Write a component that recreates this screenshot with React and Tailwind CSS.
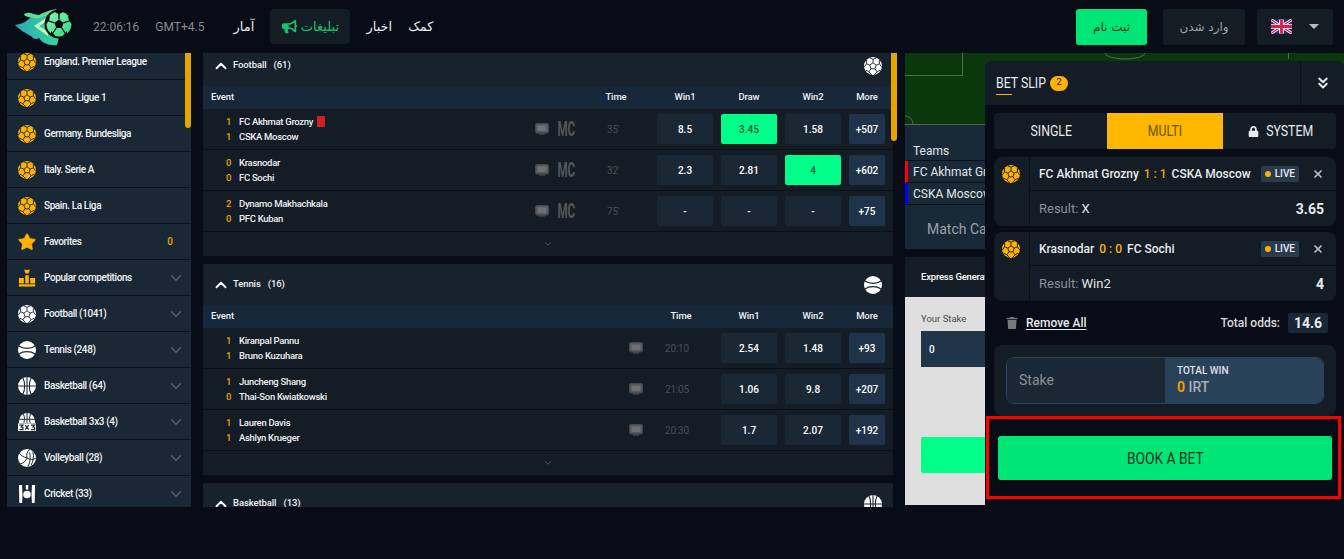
import React from "react";
import { ChevronDown, ChevronUp, ChevronsDown, X, Star } from "lucide-react";
import { FaBullhorn, FaLock, FaTrash } from "react-icons/fa";

function Ball({ color = "#ffb300", line = "#1a2836", size = 18 }) {
  return (
    <svg width={size} height={size} viewBox="0 0 20 20" className="shrink-0">
      <circle cx="10" cy="10" r="10" fill={color} />
      <g stroke={line} strokeWidth="1" fill="none">
        <path d="M10 6.400 13.500 9 12.200 13.100H7.800L6.500 9Z" />
        <path d="M10 6.400V2.500M13.500 9 17.200 7.600M12.200 13.100 14.600 16.500M7.800 13.100 5.400 16.500M6.500 9 2.800 7.600" />
        <path d="M10 2.500 6 .8M10 2.500 14 .8M17.200 7.600 19.600 11M17.200 7.600 17 3.200M14.600 16.500 18 14.500M14.600 16.500 11.500 19.800M5.400 16.500 8.500 19.800M5.400 16.500 2 14.500M2.800 7.600 .4 11M2.800 7.600 3 3.200" />
      </g>
    </svg>
  );
}
function Tennis({ size = 18, line = "#1a2836" }) {
  return (
    <svg width={size} height={size} viewBox="0 0 20 20" className="shrink-0">
      <circle cx="10" cy="10" r="10" fill="#fff" />
      <path d="M1 5.500C6 9 14 9 19 5.500M1 14.500C6 11 14 11 19 14.500" stroke={line} strokeWidth="1.400" fill="none" />
    </svg>
  );
}
function Basket({ size = 18, line = "#1a2836" }) {
  return (
    <svg width={size} height={size} viewBox="0 0 20 20" className="shrink-0">
      <circle cx="10" cy="10" r="10" fill="#fff" />
      <path d="M10 0V20M0 10H20M5.500 1C8 6 8 14 5.500 19M14.500 1C12 6 12 14 14.500 19" stroke={line} strokeWidth="1.200" fill="none" />
    </svg>
  );
}
function Basket3() {
  return (
    <svg width="18" height="18" viewBox="0 0 20 20" className="shrink-0">
      <path d="M1 11C1 4 5 0 10 0S19 4 19 11Z" fill="#fff" />
      <path d="M10 0V11M6 1C7.500 4 7.500 8 6.500 11M14 1C12.500 4 12.500 8 13.500 11M1 7H19" stroke="#1a2836" strokeWidth="1.100" fill="none" />
      <rect x="0" y="11.500" width="20" height="8.500" fill="#fff" />
      <path d="M1.500 13.500H5.500L3.500 15.500 5.500 16V18.500H1.500M8 13.500 12 18.500M12 13.500 8 18.500M14.500 13.500H18.500L16.500 15.500 18.500 16V18.500H14.500" stroke="#1a2836" strokeWidth="1.300" fill="none" />
    </svg>
  );
}
function Volley() {
  return (
    <svg width="18" height="18" viewBox="0 0 20 20" className="shrink-0">
      <circle cx="10" cy="10" r="10" fill="#fff" />
      <path d="M10 10C9 6 10 3 13 .5M10 10C6 9 3 7 1.500 4.500M10 10C13 12 17 12 19.500 10.500M10 10C9 13 6 16 2.500 16.500M13 4C14 9 14 14 11 19.500M16.500 3C18 8 17 14 14.500 18" stroke="#1a2836" strokeWidth="1.100" fill="none" />
    </svg>
  );
}
function Cricket() {
  return (
    <svg width="18" height="18" viewBox="0 0 20 20" className="shrink-0">
      <path d="M1 0H4.500L5 11 4.500 20H1.500Z M19 0H15.500L15 11 15.500 20H18.500Z" fill="#fff" />
      <path d="M8.600 0H11.400V5H8.600Z" fill="#fff" />
      <circle cx="10" cy="10.500" r="4.200" fill="#fff" />
    </svg>
  );
}
function Podium() {
  return (
    <svg width="18" height="18" viewBox="0 0 20 20" className="shrink-0">
      <path d="M7 0.500 10 1 13 0.500 12.500 3 11.500 5H8.500L7.500 3Z" fill="#ffb300" />
      <rect x="8" y="7" width="4" height="9" fill="#ffb300" />
      <rect x="1" y="10" width="5.500" height="6" fill="#ffb300" />
      <rect x="13.500" y="10" width="5.500" height="6" fill="#ffb300" />
      <rect x="1" y="17" width="18" height="2.500" fill="#ffb300" />
    </svg>
  );
}
function Tv() {
  return (
    <svg width="14" height="12" viewBox="0 0 14 12" className="shrink-0">
      <rect x=".5" y=".5" width="13" height="9.500" rx="1.500" fill="#55595e" stroke="#45494e" />
      <rect x="2.500" y="2.500" width="9" height="5.500" fill="#6d7175" />
      <rect x="4" y="10.500" width="6" height="1" fill="#55595e" />
    </svg>
  );
}
function Flag() {
  return (
    <svg width="21" height="15" viewBox="0 0 60 40">
      <rect width="60" height="40" fill="#2b2f7a" />
      <path d="M0 0 60 40M60 0 0 40" stroke="#fff" strokeWidth="8" />
      <path d="M0 0 60 40M60 0 0 40" stroke="#d61f4b" strokeWidth="3" />
      <path d="M30 0V40M0 20H60" stroke="#fff" strokeWidth="13" />
      <path d="M30 0V40M0 20H60" stroke="#d61f4b" strokeWidth="8" />
    </svg>
  );
}
function Logo() {
  return (
    <svg width="60" height="40" viewBox="0 0 60 40" className="shrink-0">
      <defs>
        <linearGradient id="fl" x1="0" y1="0" x2="1" y2="0">
          <stop offset="0" stopColor="#2aa9b0" />
          <stop offset="1" stopColor="#36d6a0" />
        </linearGradient>
        <linearGradient id="bl" x1="0" y1="0" x2="1" y2="1">
          <stop offset="0" stopColor="#8af5a8" />
          <stop offset="1" stopColor="#2fd58a" />
        </linearGradient>
      </defs>
      <path d="M9 7C14 4 17 7 24 8 28 6 34 3 42 2L32 12 20 12 10 9Z" fill="#5fe08c" />
      <path d="M0 18C8 17 12 14 16 10 22 14 28 9 36 6L44 30 42 38C34 39 27 36 24 31 22 33 18 32 16 29 12 27 5 23 0 18Z" fill="url(#fl)" />
      <path d="M19 19 34 9 33 29Z" fill="#c5f7c0" />
      <path d="M24 19 34 13 33 25Z" fill="#36c9a8" />
      <circle cx="44" cy="17" r="14.500" fill="#06090f" />
      <circle cx="44" cy="17" r="12.500" fill="url(#bl)" />
      <path d="M44 12.500 48.500 15.800 46.800 21H41.200L39.500 15.800Z" fill="#06090f" />
      <path d="M44 12.500V7M48.500 15.800 54 14M46.800 21 50 26M41.200 21 38 26M39.500 15.800 34 14" stroke="#06090f" strokeWidth="1.300" />
      <path d="M40 5 44 7.500 48 5 46 3H42ZM53 9 54 14 57 17 56.500 11ZM35 9 34 14 31 17 31.500 11ZM36 24 38 26 41 30 36 28ZM52 24 50 26 47 30 52 28Z" fill="#06090f" />
    </svg>
  );
}

const side = [
  [<Ball />, "England. Premier League"],
  [<Ball />, "France. Ligue 1"],
  [<Ball />, "Germany. Bundesliga"],
  [<Ball />, "Italy. Serie A"],
  [<Ball />, "Spain. La Liga"],
  [<Star size={20} fill="#ffb300" stroke="#ffb300" strokeWidth={1} className="shrink-0 -mx-px" />, "Favorites", "0"],
  [<Podium />, "Popular competitions", "v"],
  [<Ball color="#fff" />, "Football (1041)", "v"],
  [<Tennis />, "Tennis (248)", "v"],
  [<Basket />, "Basketball (64)", "v"],
  [<Basket3 />, "Basketball 3x3 (4)", "v"],
  [<Volley />, "Volleyball (28)", "v"],
  [<Cricket />, "Cricket (33)", "v"],
];

function SideRow({ icon, label, tail }) {
  return (
    <div className="flex h-9 shrink-0 items-center border-b border-[#0a1018] bg-[#1a2836] pl-[11px] pr-[6px]">
      <span className="flex w-[26px] shrink-0 items-center">{icon}</span>
      <span className="flex-1 truncate text-[10px] font-medium tracking-[-0.4px] text-[#f1f3f5]">{label}</span>
      {tail === "0" && <span className="mr-[12px] text-[10px] font-medium text-[#e8a200]">0</span>}
      {tail === "v" && <ChevronDown size={18} className="text-[#59626c]" strokeWidth={2} />}
    </div>
  );
}

function Odd({ v, hot, w = "w-[56px]", more }) {
  return (
    <div
      className={`flex h-[30px] items-center justify-center rounded-[2px] text-[10px] font-medium ${w} ${
        hot ? "bg-[#00ff88] text-[#0b5a39]" : more ? "bg-[#1f344a] text-white" : "bg-[#1a2836] text-white"
      }`}
    >
      {v}
    </div>
  );
}

function MatchRow({ a, b, sa, sb, card, mc, time, odds, more, hot }) {
  return (
    <div className="flex h-[41px] items-center border-b border-[#0a1018] bg-[#141c26] pr-2">
      <div className="flex flex-1 flex-col gap-[3px] pl-[23px] text-[9.500px] font-medium leading-3 tracking-[-0.3px] text-[#eef0f2]">
        <div className="flex items-center">
          <span className="w-[13px] text-[#e8a200]">{sa}</span>
          <span>{a}</span>
          {card && <span className="ml-1 h-[11px] w-2 rounded-[1px] bg-[#d02027]" />}
        </div>
        <div className="flex items-center">
          <span className="w-[13px] text-[#e8a200]">{sb}</span>
          <span>{b}</span>
        </div>
      </div>
      <span className={mc ? "mr-2" : "mr-[22px]"}><Tv /></span>
      {mc && (
        <span className="mr-[32px] flex w-[18px] justify-center">
          <span className="inline-block scale-x-[0.58] whitespace-nowrap text-[20px] font-bold leading-none text-[#53575c]">MC</span>
        </span>
      )}
      <span className={`text-[10px] tracking-[-0.2px] text-[#4b4f54] ${mc ? "w-[50px]" : "w-[56px]"}`}>{time}</span>
      <div className="flex gap-2">
        {odds.map((o, i) => (
          <Odd key={i} v={o} hot={hot === i} />
        ))}
        <Odd v={more} w="w-[36px]" more />
      </div>
    </div>
  );
}

function Section({ name, count, icon, cols, timeMr, children }) {
  return (
    <div className="shrink-0 bg-[#141c26]">
      <div className="flex h-[41px] items-center bg-[#18222d] pl-[9px] pr-[11px]">
        <ChevronUp size={18} strokeWidth={2.500} className="text-white" />
        <span className="ml-[3px] text-[9.500px] font-medium tracking-[-0.1px] text-[#eef0f2]">{name}</span>
        <span className="ml-[7px] flex-1 text-[9.500px] font-medium tracking-[-0.1px] text-[#eef0f2]">({count})</span>
        {icon}
      </div>
      {cols && (
        <div className="flex h-[23px] items-center bg-[#16283a] pr-2 pl-2 text-[9.500px] font-medium tracking-[-0.1px] text-[#eef0f2]">
          <span className="flex-1">Event</span>
          <span className={`w-[60px] text-center ${timeMr}`}>Time</span>
          <div className="flex gap-2">
            {cols.map((c) => (
              <span key={c} className="w-[56px] text-center">{c}</span>
            ))}
            <span className="w-[36px] text-center">More</span>
          </div>
        </div>
      )}
      {children}
      {cols && (
        <div className="flex h-6 items-center justify-center">
          <ChevronDown size={10} className="text-[#5b636c]" />
        </div>
      )}
    </div>
  );
}

function BetCard({ a, s1, s2, b, result, odd, mt, scoreColor }) {
  return (
    <div className={`flex h-[69px] rounded-lg bg-[#141c26] ${mt}`}>
      <div className="flex w-[36px] shrink-0 justify-center border-r border-[#0a1018] pt-2 pr-px">
        <Ball line="#141c26" />
      </div>
      <div className="flex flex-1 flex-col">
        <div className="flex h-[34px] items-center border-b border-[#0a1018] pl-[9px] pr-3 text-[12px] font-medium text-[#e8ebee]">
          <span>{a}</span>
          <span className={`mx-[5px] ${scoreColor}`}>{s1} : {s2}</span>
          <span className="flex-1">{b}</span>
          <span className="flex h-4 items-center gap-1 rounded-[2px] bg-[#2a3b4d] px-[4px] text-[10px] text-[#e8ebee]">
            <span className="h-[6px] w-[6px] rounded-full bg-[#ffb300]" />LIVE
          </span>
          <X size={12} strokeWidth={3.500} className="ml-[13px] text-[#b9bdc2]" />
        </div>
        <div className="flex flex-1 items-center pb-px pl-[9px] pr-3 pt-[2px] text-[13px]">
          <span className="flex-1 font-normal text-[#8a9097]">Result: <span className="text-[#e2e5e8]">{result}</span></span>
          <span className="text-[14px] font-bold text-[#e8ebee]">{odd}</span>
        </div>
      </div>
    </div>
  );
}

function Slip() {
  return (
    <div className="absolute left-[985px] top-2 flex h-[444px] w-[359px] flex-col rounded-t-lg bg-[#070c16]">
      <div className="flex h-[44px] shrink-0 items-center rounded-t-lg bg-[#141c26]">
        <div className="flex flex-1 items-center pl-[11px]">
          <span className="relative inline-block w-[50px] text-[15px] leading-5 text-[#e8ebee]">
            <span className="inline-block origin-left scale-x-[0.82] whitespace-nowrap">BET SLIP</span>
            <span className="absolute bottom-[-2px] left-0 h-px w-4 bg-[#ffb300]" />
          </span>
          <span className="ml-[4px] flex h-[15px] w-[18px] items-center justify-center rounded-full bg-[#ffb300] text-[9px] text-[#3a2b00]">2</span>
        </div>
        <div className="flex h-full w-[44px] items-center justify-center border-l border-[#0a1018]">
          <ChevronsDown size={18} strokeWidth={2.500} className="text-[#e8ebee]" />
        </div>
      </div>
      <div className="ml-[9px] mr-2 mt-2 flex h-9 shrink-0 items-center rounded bg-[#141c26] text-[15px] text-[#e8ebee]">
        <div className="flex w-[113px] justify-center pl-[2px]"><span className="inline-block scale-x-[0.82]">SINGLE</span></div>
        <div className="flex h-full w-[116px] items-center justify-center bg-[#ffb700] text-[#6b5300]"><span className="inline-block scale-x-[0.82]">MULTI</span></div>
        <div className="flex flex-1 items-center justify-center gap-[2px] pl-[8px]">
          <FaLock size={11} />
          <span className="inline-block scale-x-[0.82]">SYSTEM</span>
        </div>
      </div>
      <div className="ml-[9px] mr-2 mt-2">
        <BetCard a="FC Akhmat Grozny" s1="1" s2="1" b="CSKA Moscow" result="X" odd="3.65" mt="" scoreColor="text-[#e8a200]" />
        <BetCard a="Krasnodar" s1="0" s2="0" b="FC Sochi" result="Win2" odd="4" mt="mt-[6px]" scoreColor="text-[#ffb300]" />
      </div>
      <div className="flex h-[44px] shrink-0 items-center pl-[21px] pr-4">
        <FaTrash size={12} className="text-[#77797c]" />
        <span className="ml-2 flex-1 text-[12px] font-medium text-[#e8ebee] underline underline-offset-2">Remove All</span>
        <span className="mr-2 text-[12px] font-medium text-[#d8dbde]">Total odds:</span>
        <span className="flex h-5 w-10 items-center justify-center rounded-[2px] bg-[#1a2836] text-[14px] font-bold text-[#e8ebee]">14.6</span>
      </div>
      <div className="ml-[9px] mr-2 h-[71px] shrink-0 rounded-lg bg-[#141c26] px-3 pt-3">
        <div className="flex h-[47px] overflow-hidden rounded-lg border border-[#2b4257]">
          <div className="flex w-[158px] items-center bg-[#1a2836] pl-3 text-[14px] text-[#8a9097]">Stake</div>
          <div className="flex flex-1 flex-col justify-center bg-[#2a4259] pl-3">
            <span className="text-[10px] font-medium leading-3 text-[#e0e3e6]">TOTAL WIN</span>
            <span className="text-[14px] font-medium leading-5 text-[#a8aeb5]"><span className="font-bold text-[#e8a200]">0</span> IRT</span>
          </div>
        </div>
      </div>
      <div className="ml-px mr-[3px] h-[83px] shrink-0 border-[3px] border-[#ff0000] pb-4 pl-[9px] pr-[6px] pt-[17px]">
        <div className="flex h-[44px] items-center justify-center rounded-[3px] bg-[#00e676] pt-px text-[17px] text-[#07331f]">
          <span className="inline-block scale-x-[0.81]">BOOK A BET</span>
        </div>
      </div>
    </div>
  );
}

export default function App() {
  return (
    <div className="relative flex h-[559px] w-[1344px] flex-col overflow-hidden bg-[#070c16] font-[family-name:Roboto,sans-serif]">
      <header className="flex h-[53px] shrink-0 items-center pl-[15px] pr-[11px]">
        <Logo />
        <span className="ml-[18px] text-[12px] text-[#858a90]">22:06:16</span>
        <span className="ml-4 text-[12px] text-[#858a90]">GMT+4.5</span>
        <nav className="ml-[30px] flex items-center font-[family-name:'DejaVu_Sans',sans-serif] text-[13px] text-[#e8ebee]" dir="rtl">
          <span className="order-4 w-[20px] whitespace-nowrap">آمار</span>
          <span className="order-3 mx-4 flex h-[35px] w-20 items-center justify-center gap-1 whitespace-nowrap rounded bg-[#141c24] text-[#14c46c]">
            تبلیغات
            <FaBullhorn size={15} />
          </span>
          <span className="order-2 whitespace-nowrap">اخبار</span>
          <span className="order-1 ml-4 whitespace-nowrap">کمک</span>
        </nav>
        <div className="flex-1" />
        <button className="flex h-9 w-[71px] items-center justify-center rounded-[3px] bg-[#00e676] font-[family-name:'DejaVu_Sans',sans-serif] text-[12px] text-[#0a3d24]">ثبت نام</button>
        <button className="ml-4 flex h-9 w-[82px] items-center justify-center rounded-[3px] bg-[#141c24] font-[family-name:'DejaVu_Sans',sans-serif] text-[12px] text-[#9aa1a8]">وارد شدن</button>
        <button className="ml-3 flex h-9 w-[76px] items-center justify-center gap-[17px] rounded-[3px] bg-[#141c24]">
          <Flag />
          <span className="h-0 w-0 border-x-[5px] border-t-[5px] border-x-transparent border-t-[#b9bdc2]" />
        </button>
      </header>
      <div className="relative flex h-[454px] shrink-0">
        <aside className="relative ml-[7px] w-[184px] shrink-0 overflow-hidden">
          <div className="-mt-[9px] flex flex-col">
            {side.map(([i, l, t], n) => (
              <SideRow key={n} icon={i} label={l} tail={t} />
            ))}
          </div>
          <div className="absolute right-0 top-0 h-[75px] w-[6px] rounded-b-sm bg-[#e5a500]" />
        </aside>
        <main className="relative ml-3 w-[694px] shrink-0 overflow-hidden">
          <div className="-mt-2 flex w-[690px] flex-col gap-2">
            <Section name="Football" count="61" icon={<Ball color="#fff" line="#18222d" />} cols={["Win1", "Draw", "Win2"]} timeMr="mr-[11px]">
              <MatchRow a="FC Akhmat Grozny" b="CSKA Moscow" sa="1" sb="1" card mc time="35'" odds={["8.5", "3.45", "1.58"]} more="+507" hot={1} />
              <MatchRow a="Krasnodar" b="FC Sochi" sa="0" sb="0" mc time="32'" odds={["2.3", "2.81", "4"]} more="+602" hot={2} />
              <MatchRow a="Dynamo Makhachkala" b="PFC Kuban" sa="2" sb="0" mc time="75'" odds={["-", "-", "-"]} more="+75" />
            </Section>
            <Section name="Tennis" count="16" icon={<Tennis line="#18222d" />} cols={["Win1", "Win2"]} timeMr="mr-[10px]">
              <MatchRow a="Kiranpal Pannu" b="Bruno Kuzuhara" sa="1" sb="1" time="20:10" odds={["2.54", "1.48"]} more="+93" />
              <MatchRow a="Juncheng Shang" b="Thai-Son Kwiatkowski" sa="1" sb="0" time="21:05" odds={["1.06", "9.8"]} more="+207" />
              <MatchRow a="Lauren Davis" b="Ashlyn Krueger" sa="1" sb="1" time="20:30" odds={["1.7", "2.07"]} more="+192" />
            </Section>
            <Section name="Basketball" count="13" icon={<Basket line="#18222d" />} />
          </div>
          <div className="absolute right-0 top-0 h-[88px] w-[6px] rounded-b-sm bg-[#e5a500]" />
        </main>
        <section className="ml-2 flex h-[452px] flex-1 flex-col">
          <svg viewBox="0 0 439 72" className="h-[72px] w-full shrink-0 bg-[#0a380c]">
            <g fill="none" stroke="#4f6b50" strokeWidth="1">
              <path d="M0 22.500H57.500V0" />
              <path d="M0 71.500H439" />
              <path d="M0 63A8 8 0 0 1 8 71" />
              <path d="M200 0A20 6 0 0 0 240 0" />
              <path d="M383.500 0V6" />
            </g>
          </svg>
          <div className="flex h-[124px] shrink-0 flex-col bg-[#1a2938] text-[12px] text-[#e2e5e8]">
            <div className="flex h-[36px] shrink-0 items-end border-b border-[#0a1018] pl-2">Teams</div>
            <div className="flex h-[22px] shrink-0 items-center border-b border-[#0a1018] border-l-[3px] border-l-[#ff0000] pl-[5px]">FC Akhmat Grozny</div>
            <div className="flex h-[22px] shrink-0 items-center border-b border-[#0a1018] border-l-[3px] border-l-[#0000ff] pl-[5px]">CSKA Moscow</div>
            <div className="flex flex-1 items-center pl-[22px] pt-1 text-[14px] text-[#9aa1a8]">Match Card</div>
          </div>
          <div className="mt-2 flex h-10 shrink-0 items-center bg-[#141c26] pl-4 text-[9.500px] font-medium tracking-[-0.2px] text-white">Express Generator</div>
          <div className="flex flex-1 flex-col bg-[#dedede] px-4 pt-4">
            <span className="text-[9.500px] leading-3 text-[#4d4d4d]">Your Stake</span>
            <div className="mt-[6px] flex h-9 items-center bg-[#203548] pl-2 text-[10px] font-medium text-white">0</div>
            <div className="mt-[70px] h-9 rounded-[2px] bg-[#00ff88]" />
          </div>
        </section>
        <Slip />
      </div>
    </div>
  );
}
